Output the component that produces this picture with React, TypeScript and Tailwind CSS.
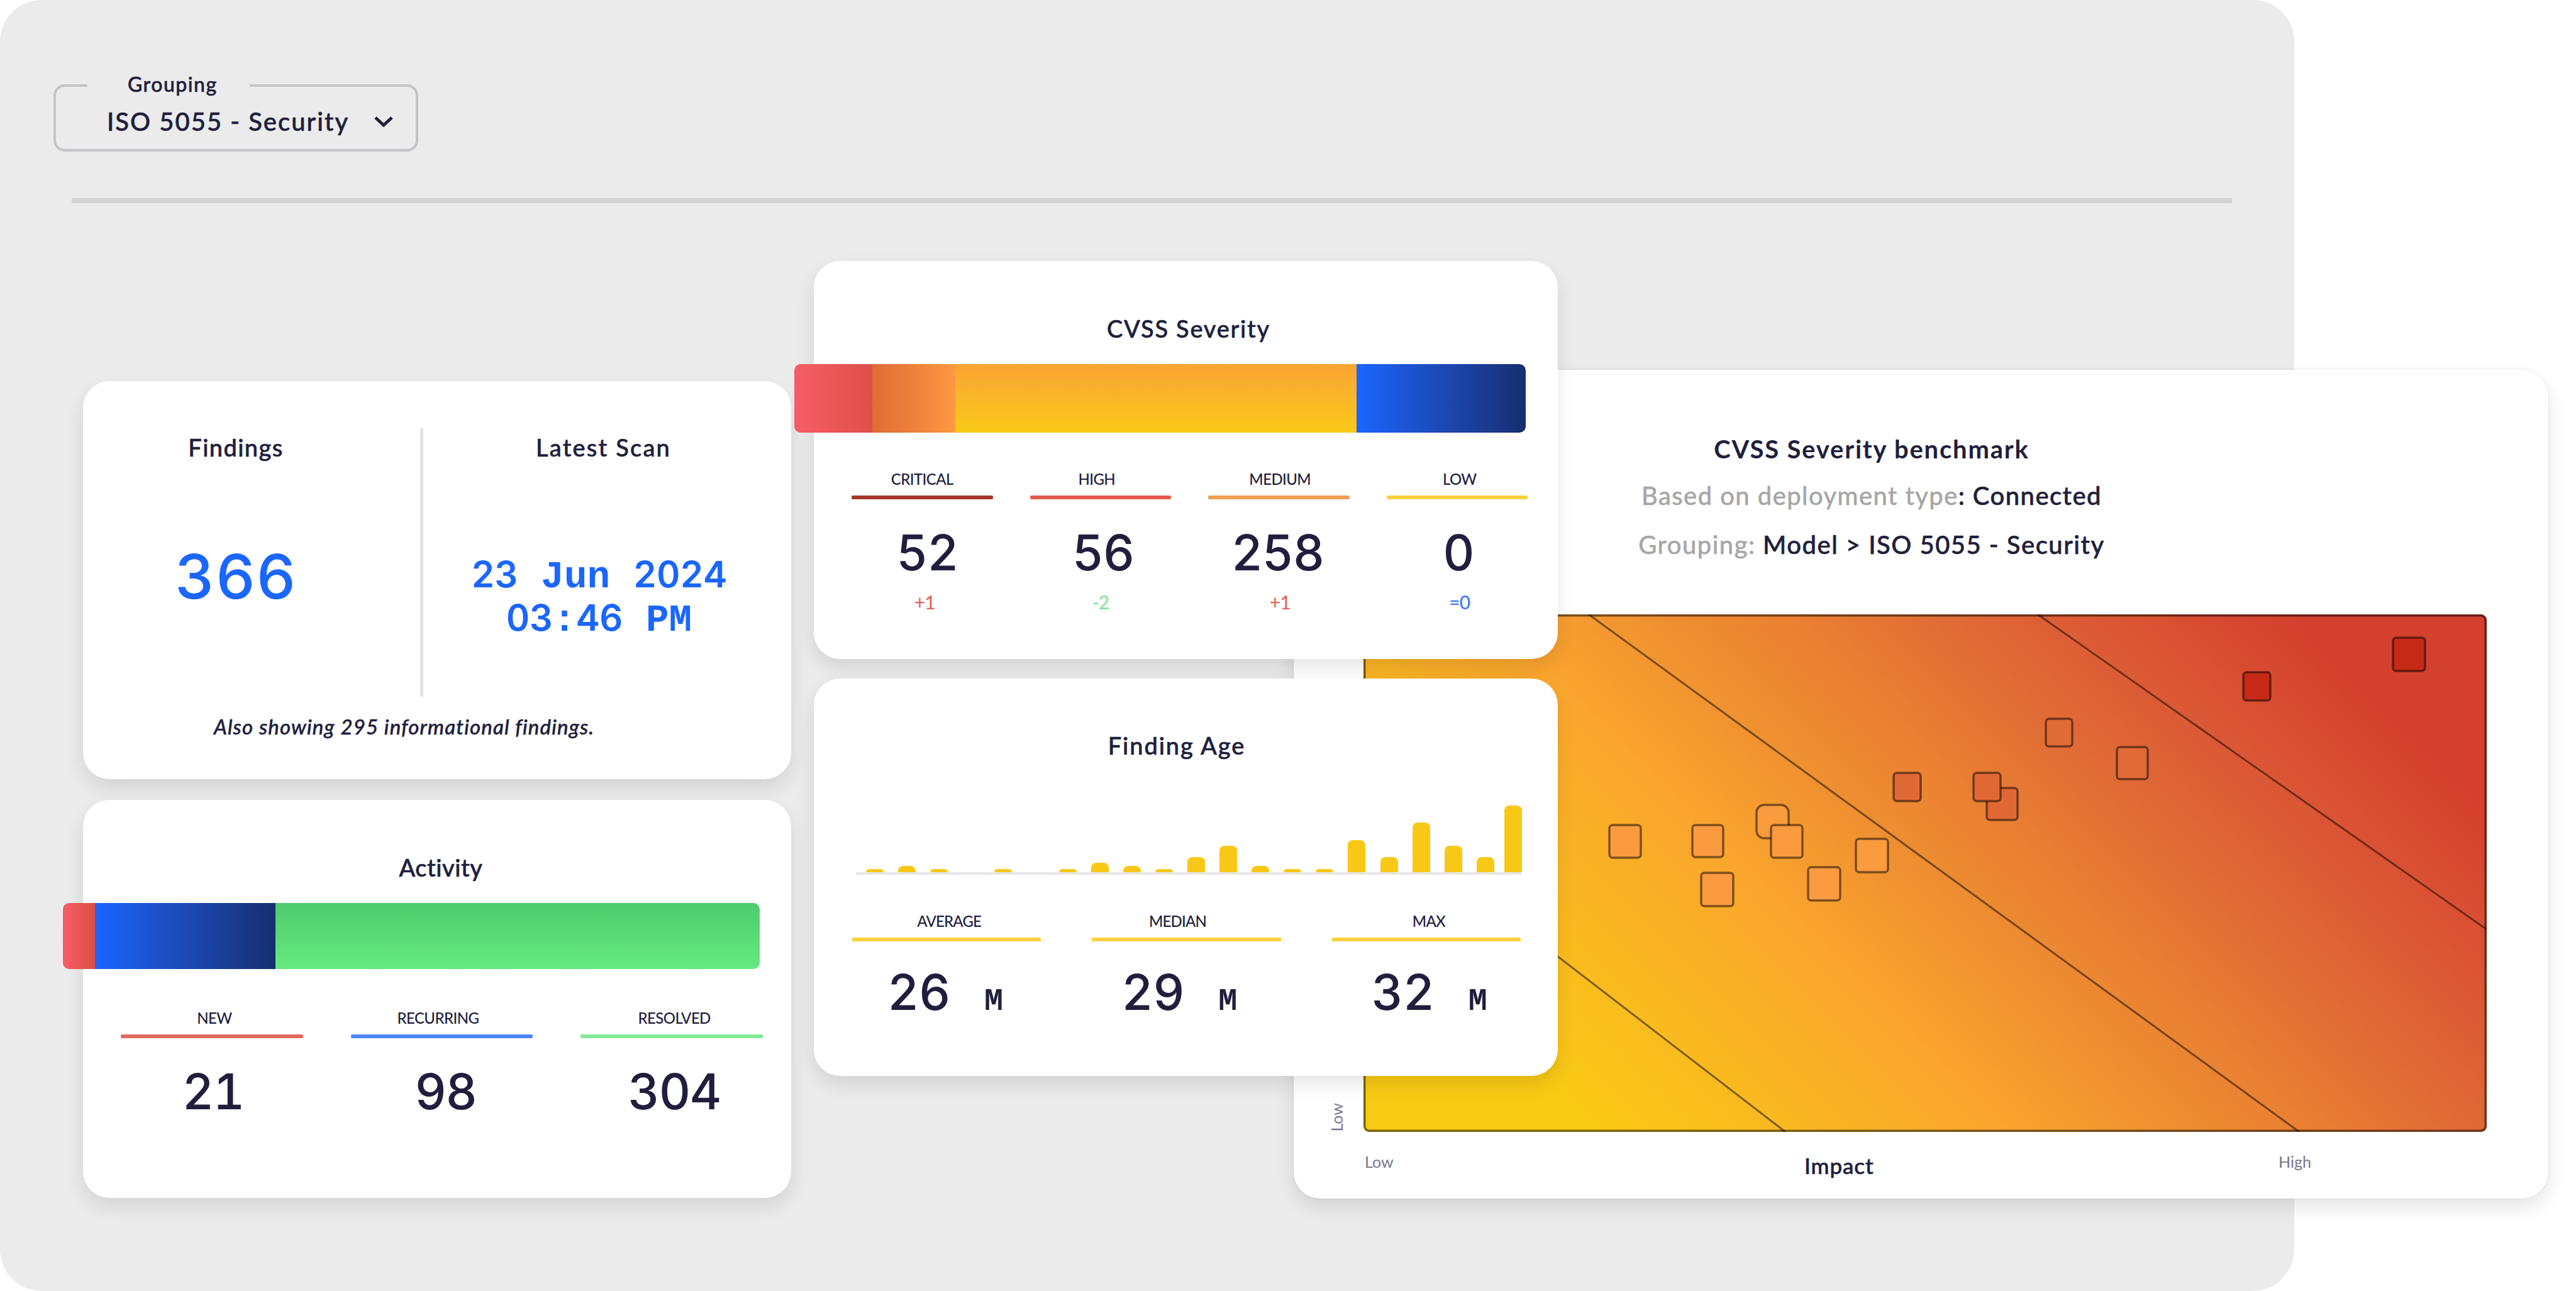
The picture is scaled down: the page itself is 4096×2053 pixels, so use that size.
import React from 'react';

type Segment = {
	className: string;
};

type StatProps = {
	label: string;
	value: string;
	line: string;
	labelClass?: string;
	valueClass?: string;
	delta?: string;
	deltaClass?: string;
};

const activitySegments: Segment[] = [
	{ className: 'w-[51px] bg-linear-to-r from-[#f75c66] to-[#dc5044]' },
	{ className: 'w-[287px] bg-linear-to-r from-[#1a66ff] to-[#172e70]' },
	{ className: 'flex-1 bg-linear-to-b from-[#4dcb6e] to-[#66ea80]' },
];

const severitySegments: Segment[] = [
	{ className: 'w-[124px] bg-linear-to-r from-[#f75c66] to-[#de5048]' },
	{ className: 'w-[132px] bg-linear-to-r from-[#de6c35] to-[#fc9842]' },
	{ className: 'w-[638px] bg-linear-to-b from-[#f9a432] to-[#f9c914]' },
	{ className: 'flex-1 bg-linear-to-r from-[#1a66ff] to-[#172e70]' },
];

const activityStats: StatProps[] = [
	{ label: 'NEW', value: '21', line: 'bg-[#e2695d]', labelClass: 'pl-2', valueClass: 'pl-1' },
	{ label: 'RECURRING', value: '98', line: 'bg-[#4f86ff]', labelClass: 'pr-3', valueClass: 'pl-3' },
	{ label: 'RESOLVED', value: '304', line: 'bg-[#84ea96]', labelClass: 'pl-2', valueClass: 'pl-2' },
];

const severityStats: StatProps[] = [
	{ label: 'CRITICAL', value: '52', line: 'bg-[#a4362c]', valueClass: 'pl-4', delta: '+1', deltaClass: 'text-[#e4665a] pl-2' },
	{ label: 'HIGH', value: '56', line: 'bg-[#e25b4c]', labelClass: 'pr-3', valueClass: 'pl-2', delta: '-2', deltaClass: 'text-[#7fe892]' },
	{ label: 'MEDIUM', value: '258', line: 'bg-[#f29d50]', labelClass: 'pl-1', valueClass: 'pr-1', delta: '+1', deltaClass: 'text-[#e4665a] pl-1' },
	{ label: 'LOW', value: '0', line: 'bg-[#fad03e]', labelClass: 'pl-2', valueClass: 'pl-1', delta: '=0', deltaClass: 'text-[#3f7cff] pl-2 font-bold' },
];

const ageStats = [
	{ label: 'AVERAGE', value: '26', labelClass: 'pl-2', valueClass: 'pl-[56px]' },
	{ label: 'MEDIAN', value: '29', labelClass: 'pr-7', valueClass: 'pl-[47px]' },
	{ label: 'MAX', value: '32', labelClass: 'pl-2', valueClass: 'pl-[63px]' },
];

const ageBars = [5, 10, 5, 0, 5, 0, 5, 15, 10, 5, 24, 42, 10, 5, 5, 51, 24, 79, 42, 24, 106];

// position and size inside the 1785 x 823 plot
const points = [
	{ x: 1637, y: 37, size: 51, fill: '#c62a17' },
	{ x: 1399, y: 92, size: 43, fill: '#c62a17' },
	{ x: 1085, y: 166, size: 42, fill: '#e06b36' },
	{ x: 1198, y: 211, size: 49, fill: '#e06b36' },
	{ x: 843, y: 252, size: 43, fill: '#e06835' },
	{ x: 991, y: 276, size: 49, fill: '#e06835' },
	{ x: 970, y: 252, size: 43, fill: '#e06835' },
	{ x: 625, y: 303, size: 51, radius: 12, fill: '#fa9b3e' },
	{ x: 648, y: 335, size: 50, fill: '#fb9a3e' },
	{ x: 391, y: 335, size: 50, fill: '#fb9a3e' },
	{ x: 523, y: 335, size: 49, fill: '#fb9a3e' },
	{ x: 783, y: 357, size: 51, fill: '#fa9b3e' },
	{ x: 537, y: 411, size: 51, fill: '#fb9a3e' },
	{ x: 707, y: 402, size: 51, fill: '#fb9a3e' },
];

function Card({ className, children }: { className: string; children: React.ReactNode }) {
	return (
		<section
			className={`flex shrink-0 flex-col rounded-[42px] bg-white shadow-[0_14px_30px_rgba(0,0,0,0.1)] ${className}`}
		>
			{children}
		</section>
	);
}

function CardTitle({ className, children }: { className: string; children: React.ReactNode }) {
	return (
		<h2
			className={`text-center text-[38px] leading-none font-medium [-webkit-text-stroke:0.6px_#1f1f3d] ${className}`}
		>
			{children}
		</h2>
	);
}

function SegmentBar({ segments, className }: { segments: Segment[]; className: string }) {
	return (
		<div className={`flex overflow-hidden rounded-[10px] ${className}`}>
			{segments.map((segment, i) => (
				<div key={i} className={segment.className} />
			))}
		</div>
	);
}

function Stat({ label, value, line, labelClass = '', valueClass = '', delta, deltaClass = '' }: StatProps) {
	return (
		<div className="flex flex-1 flex-col text-center">
			<span className={`text-[24px] leading-none font-medium tracking-[-0.6px] ${labelClass}`}>{label}</span>
			<div className={`mt-[14px] h-[6px] rounded-xs ${line}`} />
			<span
				className={`mt-[46px] font-['Inter',sans-serif] text-[78px] leading-none font-medium tracking-[-1.5px] tabular-nums ${valueClass}`}
			>
				{value}
			</span>
			{delta && (
				<span className={`mt-[24px] text-[30px] leading-none font-medium tracking-[-1px] ${deltaClass}`}>
					{delta}
				</span>
			)}
		</div>
	);
}

function GroupingSelect() {
	return (
		<fieldset className="ml-[85px] mt-[123px] h-[118px] w-[580px] rounded-[18px] border-4 border-[#c4c4c8] pl-[50px]">
			<legend className="h-[26px] w-[258px] pl-[64px] text-[32px] leading-[21px] font-medium tracking-[1.5px] [-webkit-text-stroke:0.6px_#1f1f3d]">
				Grouping
			</legend>
			<div className="mt-[24px] flex items-center pl-[31px]">
				<span className="w-[424px] text-[40px] leading-none font-medium tracking-[2px] whitespace-nowrap [-webkit-text-stroke:0.6px_#1f1f3d]">
					ISO 5055 - Security
				</span>
				<svg className="h-[18px] w-[32px]" viewBox="0 0 32 18" fill="none" stroke="#1f1f3d" strokeWidth="5">
					<path d="M3 3l13 12L29 3" />
				</svg>
			</div>
		</fieldset>
	);
}

function Digits({ children }: { children: React.ReactNode }) {
	return (
		<span className="font-['Inter',sans-serif] text-[58px] leading-none font-semibold tracking-[-0.3px] tabular-nums">
			{children}
		</span>
	);
}

function FindingsCard() {
	return (
		<Card className="h-[633px]">
			<div className="mt-[75px] flex h-[427px]">
				<div className="w-[536px] pt-[11px] pr-[50px] text-center">
					<CardTitle className="tracking-[1.4px]">Findings</CardTitle>
					<p className="mt-[138px] font-['Inter',sans-serif] text-[98px] leading-none font-medium tracking-[1px] text-[#1a66ff] tabular-nums">
						366
					</p>
				</div>
				<div className="w-[5px] bg-[#e3e3e3]" />
				<div className="flex-1 pt-[11px] pr-[12px] text-center">
					<CardTitle className="tracking-[2.2px]">Latest Scan</CardTitle>
					<p className="mt-[153px] mr-[14px] font-['Liberation_Mono',monospace] text-[61px] leading-[69px] font-bold whitespace-pre text-[#1a66ff]">
						<Digits>23</Digits> Jun <Digits>2024</Digits>
						{'\n'}
						<Digits>03</Digits>:<Digits>46</Digits> PM
					</p>
				</div>
			</div>
			<p className="mt-[31px] pr-[105px] text-center text-[33px] leading-none font-medium tracking-[1.1px] italic [-webkit-text-stroke:0.5px_#1f1f3d]">
				Also showing 295 informational findings.
			</p>
		</Card>
	);
}

function ActivityCard() {
	return (
		<Card className="h-[633px]">
			<CardTitle className="mt-[88px] pl-3 tracking-[0.5px]">Activity</CardTitle>
			<SegmentBar segments={activitySegments} className="mt-[38px] -ml-[32px] h-[105px] w-[1108px] shrink-0" />
			<div className="mt-[66px] ml-[60px] flex w-[1021px] gap-[76px]">
				{activityStats.map((stat) => (
					<Stat key={stat.label} {...stat} />
				))}
			</div>
		</Card>
	);
}

function SeverityCard() {
	return (
		<Card className="h-[633px]">
			<CardTitle className="mt-[88px] pl-[9px] tracking-[1.7px]">CVSS Severity</CardTitle>
			<SegmentBar segments={severitySegments} className="mt-[38px] -ml-[31px] h-[109px] w-[1163px] shrink-0" />
			<div className="mt-[62px] ml-[60px] flex w-[1075px] gap-[59px]">
				{severityStats.map((stat) => (
					<Stat key={stat.label} {...stat} />
				))}
			</div>
		</Card>
	);
}

function FindingAgeCard() {
	return (
		<Card className="h-[632px]">
			<CardTitle className="mt-[87px] pr-[29px] tracking-[1.9px]">Finding Age</CardTitle>
			<div className="mt-[77px] ml-[67px] flex h-[110px] w-[1058px] items-end gap-[23.1px] border-b-4 border-[#e6e6e6] pl-[16px]">
				{ageBars.map((height, i) => (
					<div
						key={i}
						className="w-[28px] shrink-0 rounded-t-[8px] bg-[#f9c816] last:-ml-[7px]"
						style={{ height }}
					/>
				))}
			</div>
			<div className="mt-[62px] ml-[61px] flex w-[1063px] gap-[81px]">
				{ageStats.map((stat) => (
					<div key={stat.label} className="flex flex-1 flex-col">
						<span
							className={`text-center text-[24px] leading-none font-medium tracking-[-0.8px] ${stat.labelClass}`}
						>
							{stat.label}
						</span>
						<div className="mt-[14px] h-[6px] bg-[#fad03e]" />
						<div className={`mt-[42px] flex items-baseline ${stat.valueClass}`}>
							<span className="w-[154px] font-['Inter',sans-serif] text-[78px] leading-none font-medium tracking-[-0.5px] tabular-nums">
								{stat.value}
							</span>
							<span className="font-['Liberation_Mono',monospace] text-[50px] leading-none font-bold">M</span>
						</div>
					</div>
				))}
			</div>
		</Card>
	);
}

function BenchmarkCard() {
	return (
		<Card className="mt-[173px] -ml-[420px] h-[1318px] w-[1995px] outline-2 outline-black/[0.03]">
			<div className="pr-[157px] text-center text-[40px] leading-none font-medium">
				<h2 className="mt-[106px] font-bold tracking-[1.8px]">CVSS Severity benchmark</h2>
				<p className="mt-[34px] tracking-[1.45px] [-webkit-text-stroke:0.6px]">
					<span className="font-normal text-[#a6a6a6]">Based on deployment type</span>: Connected
				</p>
				<p className="mt-[38px] tracking-[1.5px] [-webkit-text-stroke:0.6px]">
					<span className="font-normal text-[#a6a6a6]">Grouping:</span> Model &gt; ISO 5055 - Security
				</p>
			</div>
			<div className="mt-[91px] flex h-[823px]">
				<div className="flex w-[111px] items-end justify-end pr-[30px]">
					<span className="rotate-180 text-[25px] leading-none text-[#77778a] [writing-mode:vertical-rl]">Low</span>
				</div>
				<div className="h-[823px] w-[1786px] overflow-hidden rounded-[9px] bg-[linear-gradient(45deg,#f9ca14_14%,#faa52e_39%,#ed8c31_51%,#ea8132_57%,#e06b36_67%,#dc5a35_75%,#d4402e_88%)]">
					<svg className="h-full w-full" viewBox="0 0 1786 823" fill="none" stroke="#000" strokeOpacity="0.5">
						<g strokeWidth="3">
							<path d="M358 0L1488 823" />
							<path d="M1072 0L1786 501" />
							<path d="M0 306L671 823" />
						</g>
						{points.map((point, i) => (
							<rect
								key={i}
								x={point.x}
								y={point.y}
								width={point.size}
								height={point.size + 2}
								rx={point.radius ?? 5}
								fill={point.fill}
								strokeWidth="3.5"
							/>
						))}
						<rect x="1.5" y="1.5" width="1783" height="820" rx="8" strokeWidth="4" />
					</svg>
				</div>
			</div>
			<div className="mt-[34px] flex items-start pl-[113px] text-[25px] leading-[27px] text-[#77778a]">
				<span className="w-[699px]">Low</span>
				<span className="w-[754px] text-[35px] leading-[38px] font-medium tracking-[0.9px] text-[#1f1f3d] [-webkit-text-stroke:0.6px]">
					Impact
				</span>
				<span>High</span>
			</div>
		</Card>
	);
}

export default function App() {
	return (
		<div className="h-[2053px] w-[4096px] overflow-hidden bg-white font-['Lato',sans-serif] text-[#1f1f3d]">
			<main className="flex h-[2053px] w-[3648px] flex-col rounded-[66px] bg-[#ebebeb]">
				<GroupingSelect />
				<div className="mt-[74px] ml-[114px] h-[8px] w-[3435px] shrink-0 bg-[#d2d2d2]" />
				<div className="mt-[92px] ml-[132px] flex items-start">
					<div className="mt-[191px] flex w-[1126px] shrink-0 flex-col gap-[33px]">
						<FindingsCard />
						<ActivityCard />
					</div>
					<div className="relative z-10 ml-[36px] flex w-[1183px] shrink-0 flex-col gap-[31px]">
						<SeverityCard />
						<FindingAgeCard />
					</div>
					<BenchmarkCard />
				</div>
			</main>
		</div>
	);
}
